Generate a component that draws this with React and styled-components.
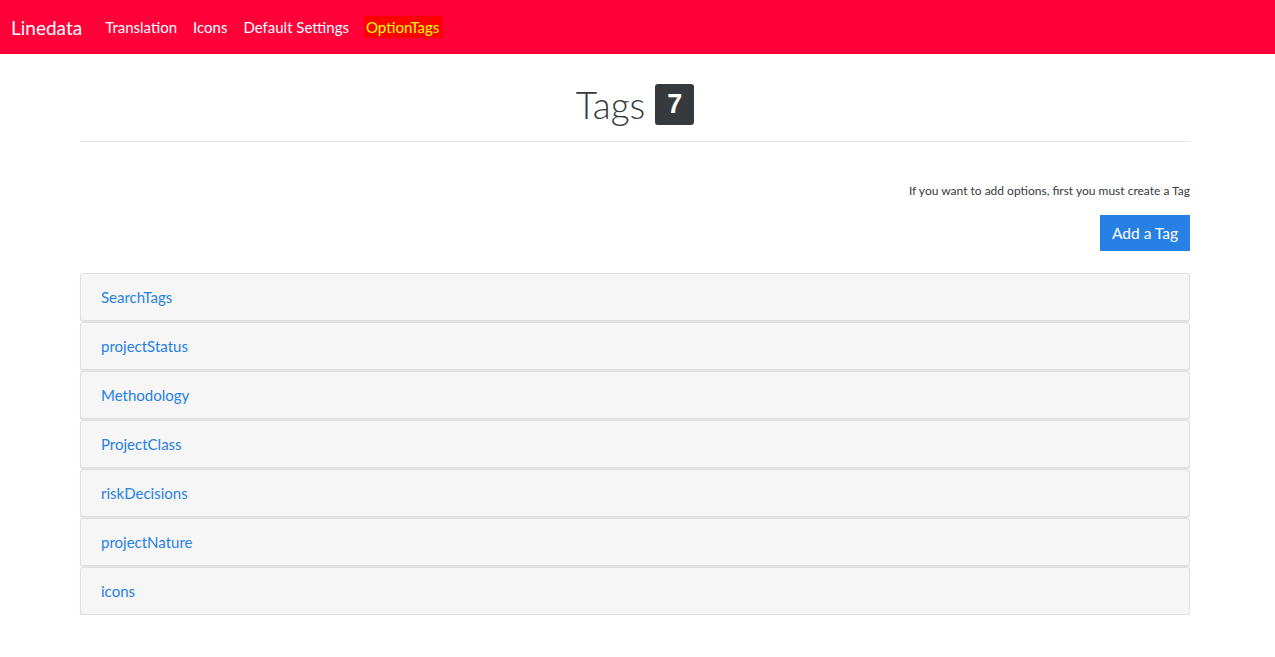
import React from 'react';
import styled, { createGlobalStyle } from 'styled-components';

const GlobalStyle = createGlobalStyle`
  body {
    margin: 0;
    background: #fff;
    color: #373a3c;
    font-family: Lato, "Open Sans", sans-serif;
  }
  * { box-sizing: border-box; }
`;

const NavBar = styled.nav`
  height: 54px;
  background: #ff0039;
  display: flex;
  align-items: center;
  padding: 0 11px;
`;

const Brand = styled.a`
  color: #fff;
  font-size: 19px;
  margin-right: 23px;
  text-decoration: none;
`;

const NavLinks = styled.div`
  display: flex;
  align-items: center;
  gap: 16px;
`;

const NavLink = styled.a`
  font-size: 15px;
  text-decoration: none;
  color: ${(p) => (p.$active ? '#ffff00' : '#fff')};
  background: ${(p) => (p.$active ? '#ff0000' : 'transparent')};
  padding: ${(p) => (p.$active ? '2px 4px 2px 2px' : '0')};
  margin-left: ${(p) => (p.$active ? '-1px' : '0')};
`;

const Container = styled.main`
  width: 1110px;
  margin: 0 0 0 80px;
`;

const TitleRow = styled.div`
  display: flex;
  justify-content: center;
  align-items: center;
  gap: 10px;
  height: 88px;
  padding-top: 14px;
  border-bottom: 1px solid #e6e6e6;
`;

const Title = styled.h1`
  margin: 0;
  font-size: 37px;
  font-weight: 300;
  color: #373a3c;
`;

const Badge = styled.span`
  display: inline-flex;
  align-items: center;
  justify-content: center;
  width: 39px;
  height: 41px;
  border-radius: 3px;
  background: #373a3c;
  color: #fff;
  font-family: "Liberation Sans", Arial, sans-serif;
  font-weight: 700;
  font-size: 27px;
`;

const Toolbar = styled.div`
  display: flex;
  flex-direction: column;
  align-items: flex-end;
  padding-top: 41px;
  gap: 17px;
  margin-bottom: 22px;
`;

const Hint = styled.small`
  font-size: 12px;
  color: #373a3c;
`;

const Button = styled.button`
  background: #2780e3;
  color: #fff;
  border: none;
  height: 36px;
  padding: 0 12px;
  font-family: inherit;
  font-size: 15.5px;
  cursor: pointer;
`;

const List = styled.div`
  display: flex;
  flex-direction: column;
  gap: 1px;
`;

const Card = styled.div`
  height: 48px;
  background: #f6f6f6;
  border: 1px solid #dfdfdf;
  border-radius: 3px;
  box-shadow: 0 1px 1px rgba(0, 0, 0, 0.12);
  display: flex;
  align-items: center;
  padding-left: 20px;
`;

const CardLink = styled.a`
  color: #2780e3;
  font-size: 15px;
  text-decoration: none;
`;

const tags = [
  'SearchTags',
  'projectStatus',
  'Methodology',
  'ProjectClass',
  'riskDecisions',
  'projectNature',
  'icons',
];

export default function App() {
  return (
    <>
      <GlobalStyle />
      <NavBar>
        <Brand href="#">Linedata</Brand>
        <NavLinks>
          <NavLink href="#">Translation</NavLink>
          <NavLink href="#">Icons</NavLink>
          <NavLink href="#">Default Settings</NavLink>
          <NavLink href="#" $active>OptionTags</NavLink>
        </NavLinks>
      </NavBar>
      <Container>
        <TitleRow>
          <Title>Tags</Title>
          <Badge>7</Badge>
        </TitleRow>
        <Toolbar>
          <Hint>If you want to add options, first you must create a Tag</Hint>
          <Button>Add a Tag</Button>
        </Toolbar>
        <List>
          {tags.map((t) => (
            <Card key={t}>
              <CardLink href="#">{t}</CardLink>
            </Card>
          ))}
        </List>
      </Container>
    </>
  );
}
